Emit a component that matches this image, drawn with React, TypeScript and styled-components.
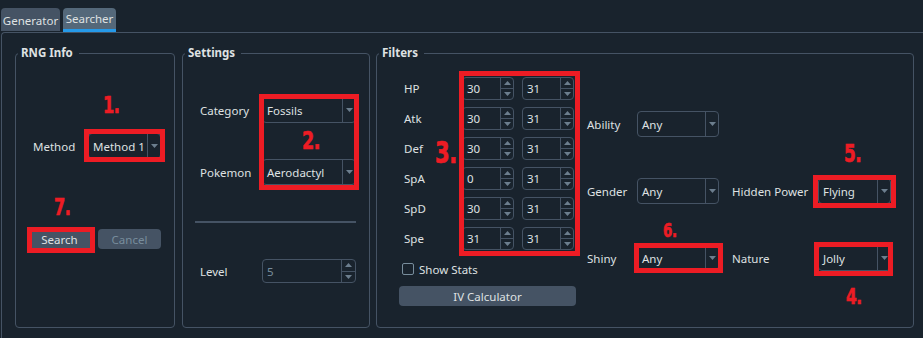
import styled, { createGlobalStyle } from 'styled-components'

const GlobalStyle = createGlobalStyle`
  html, body {
    margin: 0;
    padding: 0;
    background: #19232d;
  }
  body {
    font-family: "Noto Sans", "Open Sans", sans-serif;
    font-size: 11.5px;
    color: #dfe1e2;
  }
`

const Window = styled.div`
  position: relative;
  width: 923px;
  height: 338px;
  overflow: hidden;
  background: #19232d;
`

const TabBar = styled.div`
  display: flex;
  align-items: flex-start;
  gap: 3px;
  height: 32px;
  padding-left: 1px;
`

const Tab = styled.div<{ $active?: boolean; $w: number }>`
  box-sizing: border-box;
  width: ${p => p.$w}px;
  height: ${p => (p.$active ? 24 : 23)}px;
  margin-top: 8px;
  display: flex;
  align-items: center;
  justify-content: center;
  white-space: nowrap;
  border-radius: 4px 4px 0 0;
  background: ${p => (p.$active ? '#54687a' : '#455364')};
  border-bottom: ${p => (p.$active ? '3px solid #259ae9' : 'none')};
  padding-top: ${p => (p.$active ? 0 : 1)}px;
`

const Pane = styled.div`
  box-sizing: border-box;
  display: flex;
  height: 306px;
  margin-left: 1px;
  padding: 12px 0 0 13px;
  border-top: 1px solid #455364;
  border-left: 1px solid #455364;
  border-top-left-radius: 4px;
`

const GroupBox = styled.fieldset<{ $w: number; $gap?: number }>`
  box-sizing: border-box;
  width: ${p => p.$w}px;
  height: 283px;
  min-width: 0;
  margin: 0 0 0 ${p => p.$gap ?? 0}px;
  padding: 0;
  border: 1px solid #455364;
  border-radius: 4px;
`

const Legend = styled.legend`
  margin-left: 2px;
  padding: 0 6px 0 3px;
  font-weight: bold;
  line-height: 16px;
`

const Column = styled.div<{ $top: number }>`
  display: flex;
  flex-direction: column;
  align-items: flex-start;
  padding-top: ${p => p.$top}px;
`

const FormRow = styled.div<{ $indent: number; $label: number; $gap?: number }>`
  display: grid;
  grid-template-columns: ${p => p.$label}px auto;
  align-items: center;
  margin-top: ${p => p.$gap ?? 0}px;
  padding-left: ${p => p.$indent}px;
`

const ButtonRow = styled.div`
  display: flex;
  gap: 7px;
  margin-top: 70px;
  padding-left: 12px;
`

const Button = styled.div<{ $w: number; $disabled?: boolean }>`
  box-sizing: border-box;
  width: ${p => p.$w}px;
  height: 20px;
  display: flex;
  align-items: center;
  justify-content: center;
  border-radius: 4px;
  background: #455364;
  color: ${p => (p.$disabled ? '#788d9c' : '#dfe1e2')};
`

const Divider = styled.div`
  width: 161px;
  height: 2px;
  margin: 36px 0 36px 12px;
  background: #455364;
`

const Combo = styled.div<{ $w: number }>`
  box-sizing: border-box;
  width: ${p => p.$w}px;
  height: 26px;
  display: flex;
  border: 1px solid #455364;
  border-radius: 4px;
`

const ComboText = styled.span`
  flex: 1;
  display: flex;
  align-items: center;
  padding-left: 4px;
  white-space: nowrap;
  overflow: hidden;
`

const ComboDrop = styled.span`
  width: 12px;
  display: flex;
  align-items: center;
  justify-content: center;
  border-left: 1px solid #455364;
`

const Spin = styled.div<{ $w: number; $h: number }>`
  box-sizing: border-box;
  width: ${p => p.$w}px;
  height: ${p => p.$h}px;
  display: flex;
  border: 1px solid #455364;
  border-radius: 4px;
`

const SpinText = styled.span<{ $disabled?: boolean }>`
  flex: 1;
  display: flex;
  align-items: center;
  padding-left: 4px;
  color: ${p => (p.$disabled ? '#788d9c' : '#dfe1e2')};
`

const SpinButtons = styled.span<{ $w: number }>`
  width: ${p => p.$w}px;
  display: flex;
  flex-direction: column;
  border-left: 1px solid #455364;
`

const SpinStep = styled.span`
  flex: 1;
  display: flex;
  align-items: center;
  justify-content: center;
  & + & {
    border-top: 1px solid #455364;
  }
`

const FiltersBody = styled.div`
  display: flex;
  align-items: flex-start;
  padding: 16px 0 0 22px;
`

const IvColumn = styled.div`
  width: 177px;
  display: flex;
  flex-direction: column;
`

const IvGrid = styled.div`
  display: grid;
  grid-template-columns: 55px 52px 52px;
  grid-auto-rows: 23px;
  column-gap: 8px;
  row-gap: 7px;
  align-items: center;
`

const IvLabel = styled.span`
  padding-left: 5px;
`

const CheckRow = styled.label`
  display: flex;
  align-items: center;
  gap: 5px;
  height: 14px;
  margin-top: 12px;
  padding-left: 3px;
`

const CheckBox = styled.span`
  box-sizing: border-box;
  width: 12px;
  height: 12px;
  border: 1px solid #788d9c;
  border-radius: 2px;
`

const WideButton = styled(Button)`
  margin-top: 10px;
`

const OptionGrid = styled.div`
  display: grid;
  grid-template-columns: 50px 95px 86px 73px;
  grid-template-rows: repeat(3, 26px);
  row-gap: 41px;
  align-items: center;
  margin: 34px 0 0 11px;
  white-space: nowrap;
`

const Callout = styled.div<{ $x: number; $y: number; $w: number; $h: number }>`
  position: absolute;
  left: ${p => p.$x}px;
  top: ${p => p.$y}px;
  width: ${p => p.$w}px;
  height: ${p => p.$h}px;
  box-sizing: border-box;
  border: 5px solid #ed1c24;
  pointer-events: none;
`

const Mark = styled.span<{ $x: number; $y: number; $size: number }>`
  position: absolute;
  left: ${p => p.$x}px;
  top: ${p => p.$y - p.$size * 0.2}px;
  font-family: "DejaVu Sans Condensed", "Liberation Sans", sans-serif;
  font-stretch: condensed;
  font-weight: bold;
  font-size: ${p => p.$size}px;
  line-height: 1;
  color: #ed1c24;
  transform: scaleX(0.78);
  transform-origin: left top;
  letter-spacing: -0.5px;
  -webkit-text-stroke: 0.6px #ed1c24;
  pointer-events: none;
`

const Arrow = ({ down = true }: { down?: boolean }) => (
  <svg width="7" height="4" viewBox="0 0 7 4">
    <path d={down ? 'M0 0 L7 0 L3.5 4 Z' : 'M0 4 L7 4 L3.5 0 Z'} fill="#6c7e8e" />
  </svg>
)

const ComboBox = ({ w, value }: { w: number; value: string }) => (
  <Combo $w={w}>
    <ComboText>{value}</ComboText>
    <ComboDrop>
      <Arrow />
    </ComboDrop>
  </Combo>
)

const SpinBox = ({ w, h, value, disabled, bw = 12 }: { w: number; h: number; value: string; disabled?: boolean; bw?: number }) => (
  <Spin $w={w} $h={h}>
    <SpinText $disabled={disabled}>{value}</SpinText>
    <SpinButtons $w={bw}>
      <SpinStep><Arrow down={false} /></SpinStep>
      <SpinStep><Arrow /></SpinStep>
    </SpinButtons>
  </Spin>
)

const ivs = [
  { stat: 'HP', min: '30', max: '31' },
  { stat: 'Atk', min: '30', max: '31' },
  { stat: 'Def', min: '30', max: '31' },
  { stat: 'SpA', min: '0', max: '31' },
  { stat: 'SpD', min: '30', max: '31' },
  { stat: 'Spe', min: '31', max: '31' },
]

// red annotation boxes drawn over the screenshot
const callouts = [
  { x: 84, y: 129, w: 81, h: 33 },
  { x: 27, y: 227, w: 68, h: 26 },
  { x: 259, y: 94, w: 100, h: 96 },
  { x: 459, y: 71, w: 121, h: 185 },
  { x: 813, y: 175, w: 83, h: 33 },
  { x: 634, y: 243, w: 89, h: 30 },
  { x: 814, y: 242, w: 79, h: 34 },
]

const marks = [
  { text: '1.', x: 103, y: 99, size: 23 },
  { text: '2.', x: 302, y: 133, size: 25 },
  { text: '3.', x: 435, y: 144, size: 30 },
  { text: '4.', x: 846, y: 290, size: 22 },
  { text: '5.', x: 844, y: 147, size: 24 },
  { text: '6.', x: 663, y: 225, size: 19 },
  { text: '7.', x: 54, y: 201, size: 23 },
]

const App = () => {
  return <Window>
    <GlobalStyle />
    <TabBar>
      <Tab $w={59}>Generator</Tab>
      <Tab $w={53} $active>Searcher</Tab>
    </TabBar>
    <Pane>
      <GroupBox $w={160}>
        <Legend>RNG Info</Legend>
        <Column $top={72}>
          <FormRow $indent={17} $label={55}>
            <span>Method</span>
            <ComboBox w={73} value="Method 1" />
          </FormRow>
          <ButtonRow>
            <Button $w={63}>Search</Button>
            <Button $w={63} $disabled>Cancel</Button>
          </ButtonRow>
        </Column>
      </GroupBox>

      <GroupBox $w={188} $gap={7}>
        <Legend>Settings</Legend>
        <Column $top={36}>
          <FormRow $indent={17} $label={62}>
            <span>Category</span>
            <ComboBox w={94} value="Fossils" />
          </FormRow>
          <FormRow $indent={17} $label={62} $gap={36}>
            <span>Pokemon</span>
            <ComboBox w={94} value="Aerodactyl" />
          </FormRow>
          <Divider />
          <FormRow $indent={17} $label={62}>
            <span>Level</span>
            <SpinBox w={94} h={24} value="5" bw={13} disabled />
          </FormRow>
        </Column>
      </GroupBox>

      <GroupBox $w={538} $gap={6}>
        <Legend>Filters</Legend>
        <FiltersBody>
          <IvColumn>
            <IvGrid>
              {ivs.map(iv => <>
                <IvLabel key={iv.stat}>{iv.stat}</IvLabel>
                <SpinBox w={52} h={23} value={iv.min} />
                <SpinBox w={52} h={23} value={iv.max} />
              </>)}
            </IvGrid>
            <CheckRow>
              <CheckBox />
              <span>Show Stats</span>
            </CheckRow>
            <WideButton $w={177}>IV Calculator</WideButton>
          </IvColumn>
          <OptionGrid>
            <span>Ability</span>
            <ComboBox w={82} value="Any" />
            <span />
            <span />
            <span>Gender</span>
            <ComboBox w={82} value="Any" />
            <span>Hidden Power</span>
            <ComboBox w={73} value="Flying" />
            <span>Shiny</span>
            <ComboBox w={82} value="Any" />
            <span>Nature</span>
            <ComboBox w={73} value="Jolly" />
          </OptionGrid>
        </FiltersBody>
      </GroupBox>
    </Pane>

    {callouts.map((c, i) => <Callout key={i} $x={c.x} $y={c.y} $w={c.w} $h={c.h} />)}
    {marks.map(m => <Mark key={m.text} $x={m.x} $y={m.y} $size={m.size}>{m.text}</Mark>)}
  </Window>
}

export default App
